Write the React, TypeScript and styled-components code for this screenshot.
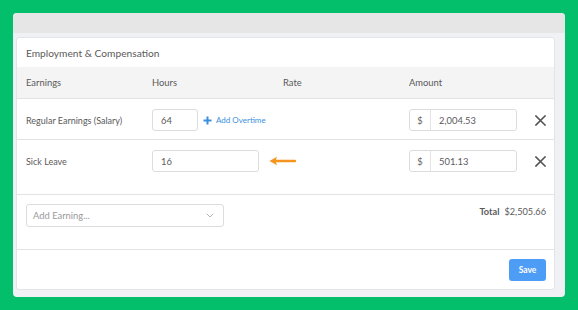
import React from 'react';
import styled, { createGlobalStyle } from 'styled-components';

const GlobalStyle = createGlobalStyle`
  html, body {
    margin: 0;
    padding: 0;
    background: #03be6b;
  }
  body {
    font-family: Lato, "Open Sans", "Liberation Sans", sans-serif;
    color: #5a5a5a;
  }
  * {
    box-sizing: border-box;
  }
`;

const Page = styled.div`
  padding: 13px;
  height: 310px;
`;

const Window = styled.div`
  display: flex;
  flex-direction: column;
  height: 284px;
  background: #eff1f4;
  border-radius: 4px;
  overflow: hidden;
`;

const TitleBar = styled.div`
  height: 20px;
  flex-shrink: 0;
  background: #e6e6e6;
`;

const WindowBody = styled.div`
  flex: 1;
  padding: 4px 10px 7px 3px;
  display: flex;
`;

const Card = styled.div`
  flex: 1;
  display: flex;
  flex-direction: column;
  background: #fff;
  border: 1px solid #e2e4e7;
  border-radius: 3px;
  overflow: hidden;
`;

const CardTitle = styled.div`
  height: 29px;
  display: flex;
  align-items: center;
  padding-left: 9px;
  font-size: 10.2px;
  color: #5a5a5a;
`;

const cols = '126px 131px 126px 108px 1fr';

const HeaderRow = styled.div`
  display: grid;
  grid-template-columns: ${cols};
  align-items: center;
  height: 32px;
  padding-left: 9px;
  background: #f4f4f4;
  border-bottom: 1px solid #e3e3e3;
  font-size: 9.4px;
  color: #5a5a5a;
`;

const Row = styled.div<{ $tall?: boolean }>`
  display: grid;
  grid-template-columns: ${cols};
  align-items: center;
  align-content: start;
  height: ${p => (p.$tall ? 55 : 41)}px;
  padding: 10px 0 0 9px;
  border-bottom: 1px solid #e3e3e3;
  font-size: 9px;
  color: #5a5a5a;
`;

const HoursCell = styled.div`
  grid-column: span 2;
  display: flex;
  align-items: center;
`;

const TextInput = styled.div<{ $w: number }>`
  width: ${p => p.$w}px;
  height: 22px;
  display: flex;
  align-items: center;
  padding-left: 8px;
  border: 1px solid #dcdcdc;
  border-radius: 3px;
  font-size: 9.4px;
  color: #5a5a5a;
  background: #fff;
`;

const LinkButton = styled.span`
  display: flex;
  align-items: center;
  gap: 4px;
  margin-left: 5px;
  font-size: 8px;
  color: #3b8fe0;
`;

const Arrow = styled.svg`
  margin-left: 10px;
`;

const AmountGroup = styled.div`
  display: flex;
  width: 108px;
  height: 22px;
  border: 1px solid #dcdcdc;
  border-radius: 3px;
  font-size: 9.4px;
`;

const Addon = styled.span`
  width: 21px;
  display: flex;
  align-items: center;
  justify-content: center;
  border-right: 1px solid #e3e3e3;
  color: #666;
`;

const AmountValue = styled.span`
  display: flex;
  align-items: center;
  padding-left: 8px;
  color: #5a5a5a;
`;

const RemoveCell = styled.div`
  display: flex;
  justify-content: flex-end;
  padding-right: 8px;
`;

const AddSection = styled.div`
  height: 55px;
  display: flex;
  justify-content: space-between;
  align-items: flex-start;
  padding: 9px 8px 0 9px;
  border-bottom: 1px solid #e3e3e3;
`;

const Select = styled.div`
  width: 198px;
  height: 23px;
  display: flex;
  align-items: center;
  justify-content: space-between;
  padding: 0 9px 0 6px;
  border: 1px solid #dcdcdc;
  border-radius: 3px;
  font-size: 9.4px;
  color: #9a9a9a;
`;

const Total = styled.div`
  display: flex;
  gap: 5px;
  margin-top: 2px;
  font-size: 9.2px;
  color: #5a5a5a;
  strong {
    font-weight: 700;
  }
`;

const Footer = styled.div`
  flex: 1;
  display: flex;
  justify-content: flex-end;
  align-items: flex-start;
  padding: 9px 8px 0 0;
`;

const SaveButton = styled.button`
  width: 37px;
  height: 22px;
  border: none;
  border-radius: 3px;
  background: #4d9cf6;
  color: #fff;
  font-family: inherit;
  font-size: 8.5px;
  font-weight: 700;
  padding: 0;
`;

const CloseIcon = () => (
  <svg width="11" height="11" viewBox="0 0 11 11">
    <path d="M1 1 L10 10 M10 1 L1 10" stroke="#555" strokeWidth="1.6" strokeLinecap="square" />
  </svg>
);

export default function App() {
  return (
    <>
      <GlobalStyle />
      <Page>
        <Window>
          <TitleBar />
          <WindowBody>
            <Card>
              <CardTitle>Employment &amp; Compensation</CardTitle>
              <HeaderRow>
                <span>Earnings</span>
                <span>Hours</span>
                <span>Rate</span>
                <span>Amount</span>
                <span />
              </HeaderRow>
              <Row>
                <span>Regular Earnings (Salary)</span>
                <HoursCell>
                  <TextInput $w={46}>64</TextInput>
                  <LinkButton>
                    <svg width="9" height="9" viewBox="0 0 9 9">
                      <path d="M4.5 0.5 V8.5 M0.5 4.5 H8.5" stroke="#3b8fe0" strokeWidth="2" />
                    </svg>
                    Add Overtime
                  </LinkButton>
                </HoursCell>
                <AmountGroup>
                  <Addon>$</Addon>
                  <AmountValue>2,004.53</AmountValue>
                </AmountGroup>
                <RemoveCell>
                  <CloseIcon />
                </RemoveCell>
              </Row>
              <Row $tall>
                <span>Sick Leave</span>
                <HoursCell>
                  <TextInput $w={107}>16</TextInput>
                  <Arrow width="27" height="10" viewBox="0 0 27 10">
                    <path d="M26 5 H6" stroke="#f7941d" strokeWidth="2.4" strokeLinecap="round" />
                    <path d="M0.5 5 L8 0.8 L6.5 5 L8 9.2 Z" fill="#f7941d" />
                  </Arrow>
                </HoursCell>
                <AmountGroup>
                  <Addon>$</Addon>
                  <AmountValue>501.13</AmountValue>
                </AmountGroup>
                <RemoveCell>
                  <CloseIcon />
                </RemoveCell>
              </Row>
              <AddSection>
                <Select>
                  Add Earning...
                  <svg width="8" height="5" viewBox="0 0 8 5">
                    <path d="M0.7 0.7 L4 4 L7.3 0.7" stroke="#b5b5b5" strokeWidth="1" fill="none" />
                  </svg>
                </Select>
                <Total>
                  <strong>Total</strong>
                  <span>$2,505.66</span>
                </Total>
              </AddSection>
              <Footer>
                <SaveButton>Save</SaveButton>
              </Footer>
            </Card>
          </WindowBody>
        </Window>
      </Page>
    </>
  );
}
